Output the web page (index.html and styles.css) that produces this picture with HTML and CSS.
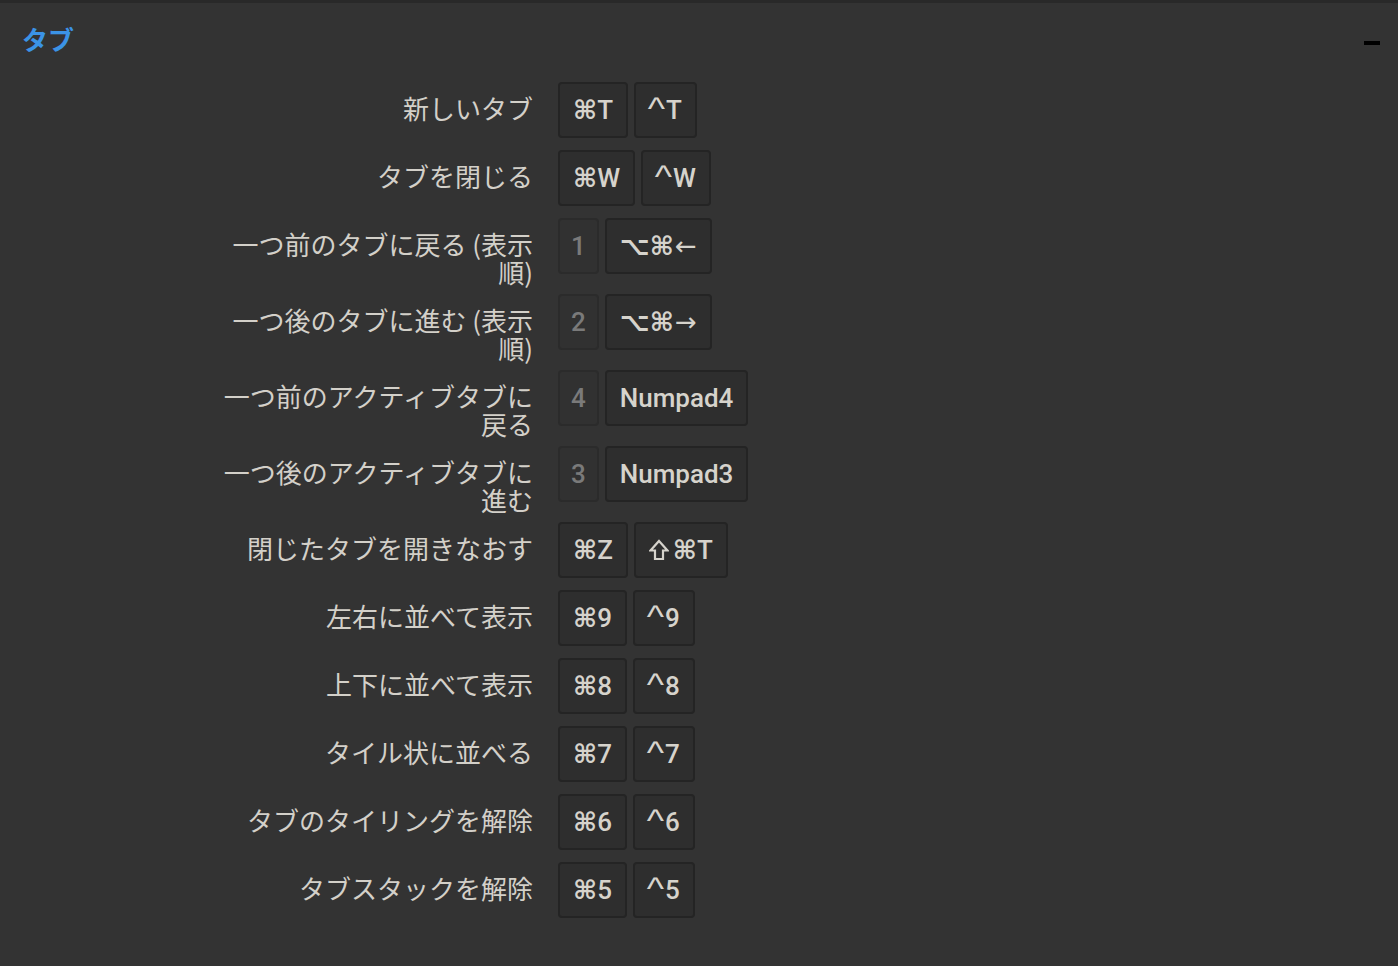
FILE: index.html
```html
<!DOCTYPE html>
<html lang="ja">
<head>
<meta charset="utf-8">
<title>タブ</title>
<link rel="stylesheet" href="styles.css">
</head>
<body>
<div class="topbar"></div>
<section class="panel">
  <header class="head">
    <h2 class="title">タブ</h2>
    <span class="collapse"></span>
  </header>
  <div class="list">
    <div class="row"><div class="label">新しいタブ</div><div class="keys"><span class="key"><span class="sym">⌘</span>T</span><span class="key"><span class="ctl">^</span>T</span></div></div>
    <div class="row"><div class="label">タブを閉じる</div><div class="keys"><span class="key"><span class="sym">⌘</span>W</span><span class="key"><span class="ctl">^</span>W</span></div></div>
    <div class="row"><div class="label">一つ前のタブに戻る (表示順)</div><div class="keys"><span class="key off">1</span><span class="key"><span class="sym">⌥⌘</span><span class="arr">←</span></span></div></div>
    <div class="row"><div class="label">一つ後のタブに進む (表示順)</div><div class="keys"><span class="key off">2</span><span class="key"><span class="sym">⌥⌘</span><span class="arr">→</span></span></div></div>
    <div class="row"><div class="label">一つ前のアクティブタブに戻る</div><div class="keys"><span class="key off">4</span><span class="key">Numpad4</span></div></div>
    <div class="row"><div class="label">一つ後のアクティブタブに進む</div><div class="keys"><span class="key off">3</span><span class="key">Numpad3</span></div></div>
    <div class="row"><div class="label">閉じたタブを開きなおす</div><div class="keys"><span class="key"><span class="sym">⌘</span>Z</span><span class="key"><svg class="shift" viewBox="0 0 20 22" width="20" height="22" aria-label="⇧"><path d="M10 2 L18.5 11.5 H14 V20 H6 V11.5 H1.5 Z" fill="none" stroke="currentColor" stroke-width="2.2" stroke-linejoin="miter"/></svg><span class="sym">⌘</span>T</span></div></div>
    <div class="row"><div class="label">左右に並べて表示</div><div class="keys"><span class="key"><span class="sym">⌘</span>9</span><span class="key"><span class="ctl">^</span>9</span></div></div>
    <div class="row"><div class="label">上下に並べて表示</div><div class="keys"><span class="key"><span class="sym">⌘</span>8</span><span class="key"><span class="ctl">^</span>8</span></div></div>
    <div class="row"><div class="label">タイル状に並べる</div><div class="keys"><span class="key"><span class="sym">⌘</span>7</span><span class="key"><span class="ctl">^</span>7</span></div></div>
    <div class="row"><div class="label">タブのタイリングを解除</div><div class="keys"><span class="key"><span class="sym">⌘</span>6</span><span class="key"><span class="ctl">^</span>6</span></div></div>
    <div class="row"><div class="label">タブスタックを解除</div><div class="keys"><span class="key"><span class="sym">⌘</span>5</span><span class="key"><span class="ctl">^</span>5</span></div></div>
  </div>
</section>
</body>
</html>
```

FILE: styles.css
```css
html, body {
  margin: 0;
  padding: 0;
  background: #333333;
  height: 100%;
}
body {
  font-family: "Noto Sans CJK JP", sans-serif;
  color: #d3d0c9;
}
.topbar {
  height: 3px;
  background: #292929;
}
.panel {
  padding: 0 18px 0 22px;
}
.head {
  display: flex;
  align-items: center;
  justify-content: space-between;
  height: 74px;
  padding-bottom: 5px;
}
.title {
  margin: 0;
  font-size: 26px;
  font-weight: 700;
  color: #3b93e6;
  line-height: 1;
  padding-bottom: 3px;
}
.collapse {
  display: block;
  width: 16px;
  height: 4px;
  background: #000;
  margin-top: 6px;
}
.list {
  padding-left: 191px;
}
.row {
  display: flex;
  align-items: flex-start;
}
.label {
  width: 320px;
  text-align: right;
  font-size: 26px;
  line-height: 28px;
  padding: 12px 0 8px;
  margin-right: 25px;
}
.keys {
  display: flex;
  gap: 6px;
  padding-bottom: 12px;
}
.key {
  display: block;
  box-sizing: border-box;
  height: 56px;
  line-height: 52px;
  padding: 0 13px;
  border: 2px solid #242424;
  border-radius: 4px;
  background: #2e2e2e;
  font-family: Roboto, "Liberation Sans", sans-serif;
  font-weight: 500;
  font-size: 26px;
  color: #d6d3cc;
  white-space: nowrap;
}
.sym {
  font-family: "DejaVu Sans", "Noto Sans CJK JP", sans-serif;
  font-weight: 700;
  font-size: 26px;
  line-height: 1;
}
.arr {
  font-family: "DejaVu Sans", sans-serif;
  font-weight: 400;
  font-size: 26px;
  line-height: 1;
  margin-left: 1px;
}
.ctl {
  font-family: "Liberation Sans", sans-serif;
  font-weight: 400;
  font-size: 32px;
  line-height: 1;
  display: inline-block;
  margin-right: 2px;
  transform: scaleX(1.15);
}
.shift {
  vertical-align: -2px;
  margin-right: 4px;
}
.key.off {
  background: #313131;
  border-color: #2b2b2b;
  color: #7a7a7a;
  padding: 0 11px;
}
```
